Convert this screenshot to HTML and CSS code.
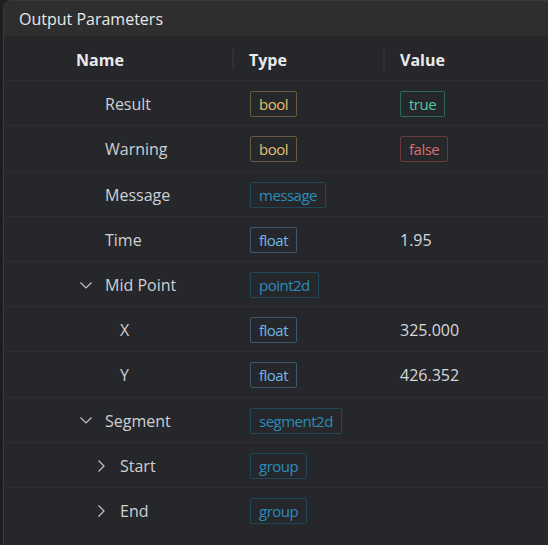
FILE: index.html
```html
<!DOCTYPE html>
<html>
<head>
<meta charset="utf-8">
<link rel="stylesheet" href="styles.css">
</head>
<body>
<div class="panel">
  <div class="panel-title">Output Parameters</div>
  <div class="table">
    <div class="row head">
      <div class="cell name-h">Name</div>
      <div class="cell col-h"><span class="divider"></span>Type</div>
      <div class="cell col-h"><span class="divider"></span>Value</div>
    </div>

    <div class="row">
      <div class="cell name lvl0"><span class="tw"></span><span>Result</span></div>
      <div class="cell type"><span class="badge b-bool">bool</span></div>
      <div class="cell value"><span class="badge b-true">true</span></div>
    </div>
    <div class="row">
      <div class="cell name lvl0"><span class="tw"></span><span>Warning</span></div>
      <div class="cell type"><span class="badge b-bool">bool</span></div>
      <div class="cell value"><span class="badge b-false">false</span></div>
    </div>
    <div class="row">
      <div class="cell name lvl0"><span class="tw"></span><span>Message</span></div>
      <div class="cell type"><span class="badge b-dark">message</span></div>
      <div class="cell value"></div>
    </div>
    <div class="row">
      <div class="cell name lvl0"><span class="tw"></span><span>Time</span></div>
      <div class="cell type"><span class="badge b-float">float</span></div>
      <div class="cell value">1.95</div>
    </div>
    <div class="row">
      <div class="cell name lvl0"><span class="tw"><svg width="12" height="7" viewBox="0 0 12 7"><path d="M0.5 0.5 L6 6 L11.5 0.5" fill="none" stroke="#c4c4c4" stroke-width="1.2"/></svg></span><span>Mid Point</span></div>
      <div class="cell type"><span class="badge b-dark">point2d</span></div>
      <div class="cell value"></div>
    </div>
    <div class="row">
      <div class="cell name lvl1"><span class="tw"></span><span>X</span></div>
      <div class="cell type"><span class="badge b-float">float</span></div>
      <div class="cell value">325.000</div>
    </div>
    <div class="row">
      <div class="cell name lvl1"><span class="tw"></span><span>Y</span></div>
      <div class="cell type"><span class="badge b-float">float</span></div>
      <div class="cell value">426.352</div>
    </div>
    <div class="row">
      <div class="cell name lvl0"><span class="tw"><svg width="12" height="7" viewBox="0 0 12 7"><path d="M0.5 0.5 L6 6 L11.5 0.5" fill="none" stroke="#c4c4c4" stroke-width="1.2"/></svg></span><span>Segment</span></div>
      <div class="cell type"><span class="badge b-dark">segment2d</span></div>
      <div class="cell value"></div>
    </div>
    <div class="row">
      <div class="cell name lvl1"><span class="tw"><svg width="7" height="12" viewBox="0 0 7 12"><path d="M0.5 0.5 L6 6 L0.5 11.5" fill="none" stroke="#c4c4c4" stroke-width="1.2"/></svg></span><span>Start</span></div>
      <div class="cell type"><span class="badge b-dark">group</span></div>
      <div class="cell value"></div>
    </div>
    <div class="row last">
      <div class="cell name lvl1"><span class="tw"><svg width="7" height="12" viewBox="0 0 7 12"><path d="M0.5 0.5 L6 6 L0.5 11.5" fill="none" stroke="#c4c4c4" stroke-width="1.2"/></svg></span><span>End</span></div>
      <div class="cell type"><span class="badge b-dark">group</span></div>
      <div class="cell value"></div>
    </div>
  </div>
</div>
</body>
</html>
```
FILE: styles.css
```css
html, body {
  margin: 0;
  padding: 0;
  background: #1e1e1f;
  height: 100%;
  overflow: hidden;
}
body {
  font-family: "Open Sans", "Noto Sans", sans-serif;
  font-size: 16px;
  color: #cfd0d2;
}
.panel {
  margin-left: 3px;
  border-left: 1px solid #38393c;
  border-top: 1px solid #38393c;
  border-top-left-radius: 8px;
  background: #26272b;
  height: 100%;
  overflow: hidden;
}
.panel-title {
  height: 35px;
  background: #2e2e2f;
  display: flex;
  align-items: center;
  padding-left: 15px;
  color: #e8e8e8;
  font-size: 16px;
}
.table {
  display: flex;
  flex-direction: column;
}
.row {
  display: grid;
  grid-template-columns: 228px 151px 1fr;
  height: 45.2px;
  border-bottom: 1px solid #2e2f34;
  box-sizing: border-box;
}
.row.last { border-bottom: none; }
.cell {
  display: flex;
  align-items: center;
  padding-top: 2px;
}
.head .cell {
  font-weight: 700;
  color: #e9eaec;
  padding-top: 3px;
}
.name-h { padding-left: 72px; }
.col-h { padding-left: 0; }
.divider {
  width: 2px;
  height: 21px;
  background: #303136;
  margin-right: 15px;
}
.type { padding-left: 18px; }
.value { padding-left: 17px; color: #d6d7d9; }
.name { padding-left: 72px; }
.name.lvl1 { padding-left: 87px; }
.tw {
  width: 20px;
  margin-right: 9px;
  display: flex;
  align-items: center;
  justify-content: center;
}
.badge {
  display: inline-flex;
  align-items: center;
  height: 26px;
  box-sizing: border-box;
  padding: 0 8px;
  border: 1px solid;
  border-radius: 2px;
  font-size: 15px;
  letter-spacing: -0.5px;
}
.b-bool { color: #e3bf72; border-color: #6a5a3e; }
.b-true { color: #4fcba3; border-color: #2d6a5a; }
.b-false { color: #dc6f74; border-color: #6a3a3f; }
.b-float { color: #6cb8e6; border-color: #3a5a6e; }
.b-dark { color: #2b8cb8; border-color: #1f4659; }
```
